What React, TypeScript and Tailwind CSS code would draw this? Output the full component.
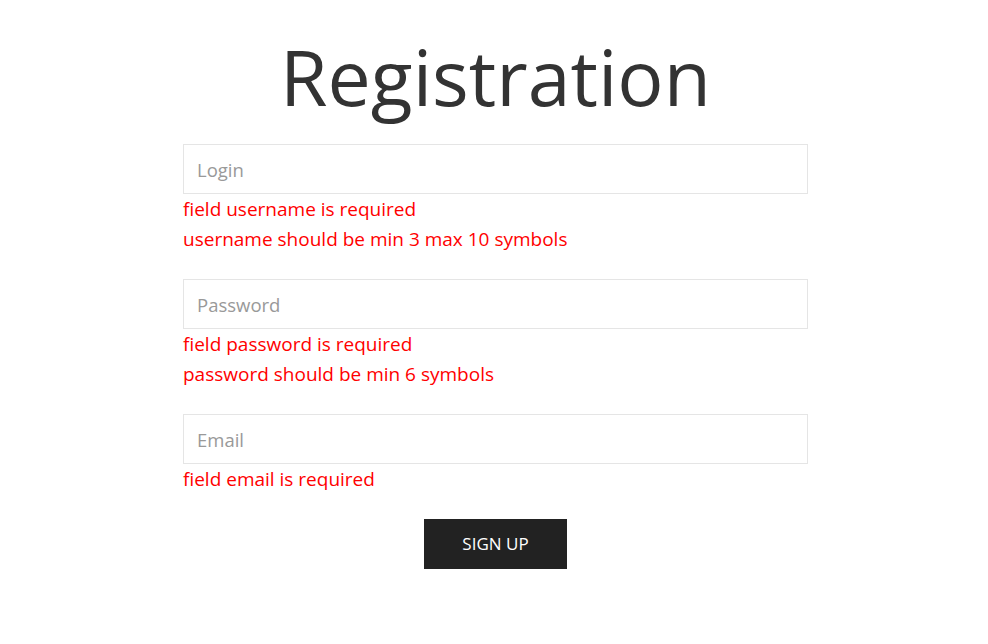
import React from 'react';

type Field = {
  name: string;
  placeholder: string;
  type: string;
  errors: string[];
};

const fields: Field[] = [
  {
    name: 'username',
    placeholder: 'Login',
    type: 'text',
    errors: ['field username is required', 'username should be min 3 max 10 symbols'],
  },
  {
    name: 'password',
    placeholder: 'Password',
    type: 'password',
    errors: ['field password is required', 'password should be min 6 symbols'],
  },
  {
    name: 'email',
    placeholder: 'Email',
    type: 'email',
    errors: ['field email is required'],
  },
];

export default function App() {
  return (
    <div
      className="min-h-[644px] w-full bg-white text-[#333]"
      style={{ fontFamily: '"Open Sans", "Noto Sans", sans-serif' }}
    >
      <div className="ml-[183px] w-[625px] pt-[22px]">
        <h1 className="text-center text-[77px] leading-[110px] font-normal text-[#333] mb-[12px]">Registration</h1>
        <form onSubmit={(e) => e.preventDefault()}>
          {fields.map((f) => (
            <div key={f.name} className="mb-[25px]">
              <input
                name={f.name}
                type={f.type}
                placeholder={f.placeholder}
                className="block w-full h-[50px] border border-[#e5e5e5] px-[13px] text-[18.5px] text-[#333] placeholder:text-[#999] outline-none"
              />
              {f.errors.map((err) => (
                <div key={err} className="text-[#ff0000] text-[19px] leading-[30px]">
                  {err}
                </div>
              ))}
            </div>
          ))}
          <div className="flex justify-center">
            <button type="submit" className="w-[143px] h-[50px] bg-[#222] text-white text-[17px] uppercase">
              Sign up
            </button>
          </div>
        </form>
      </div>
    </div>
  );
}
